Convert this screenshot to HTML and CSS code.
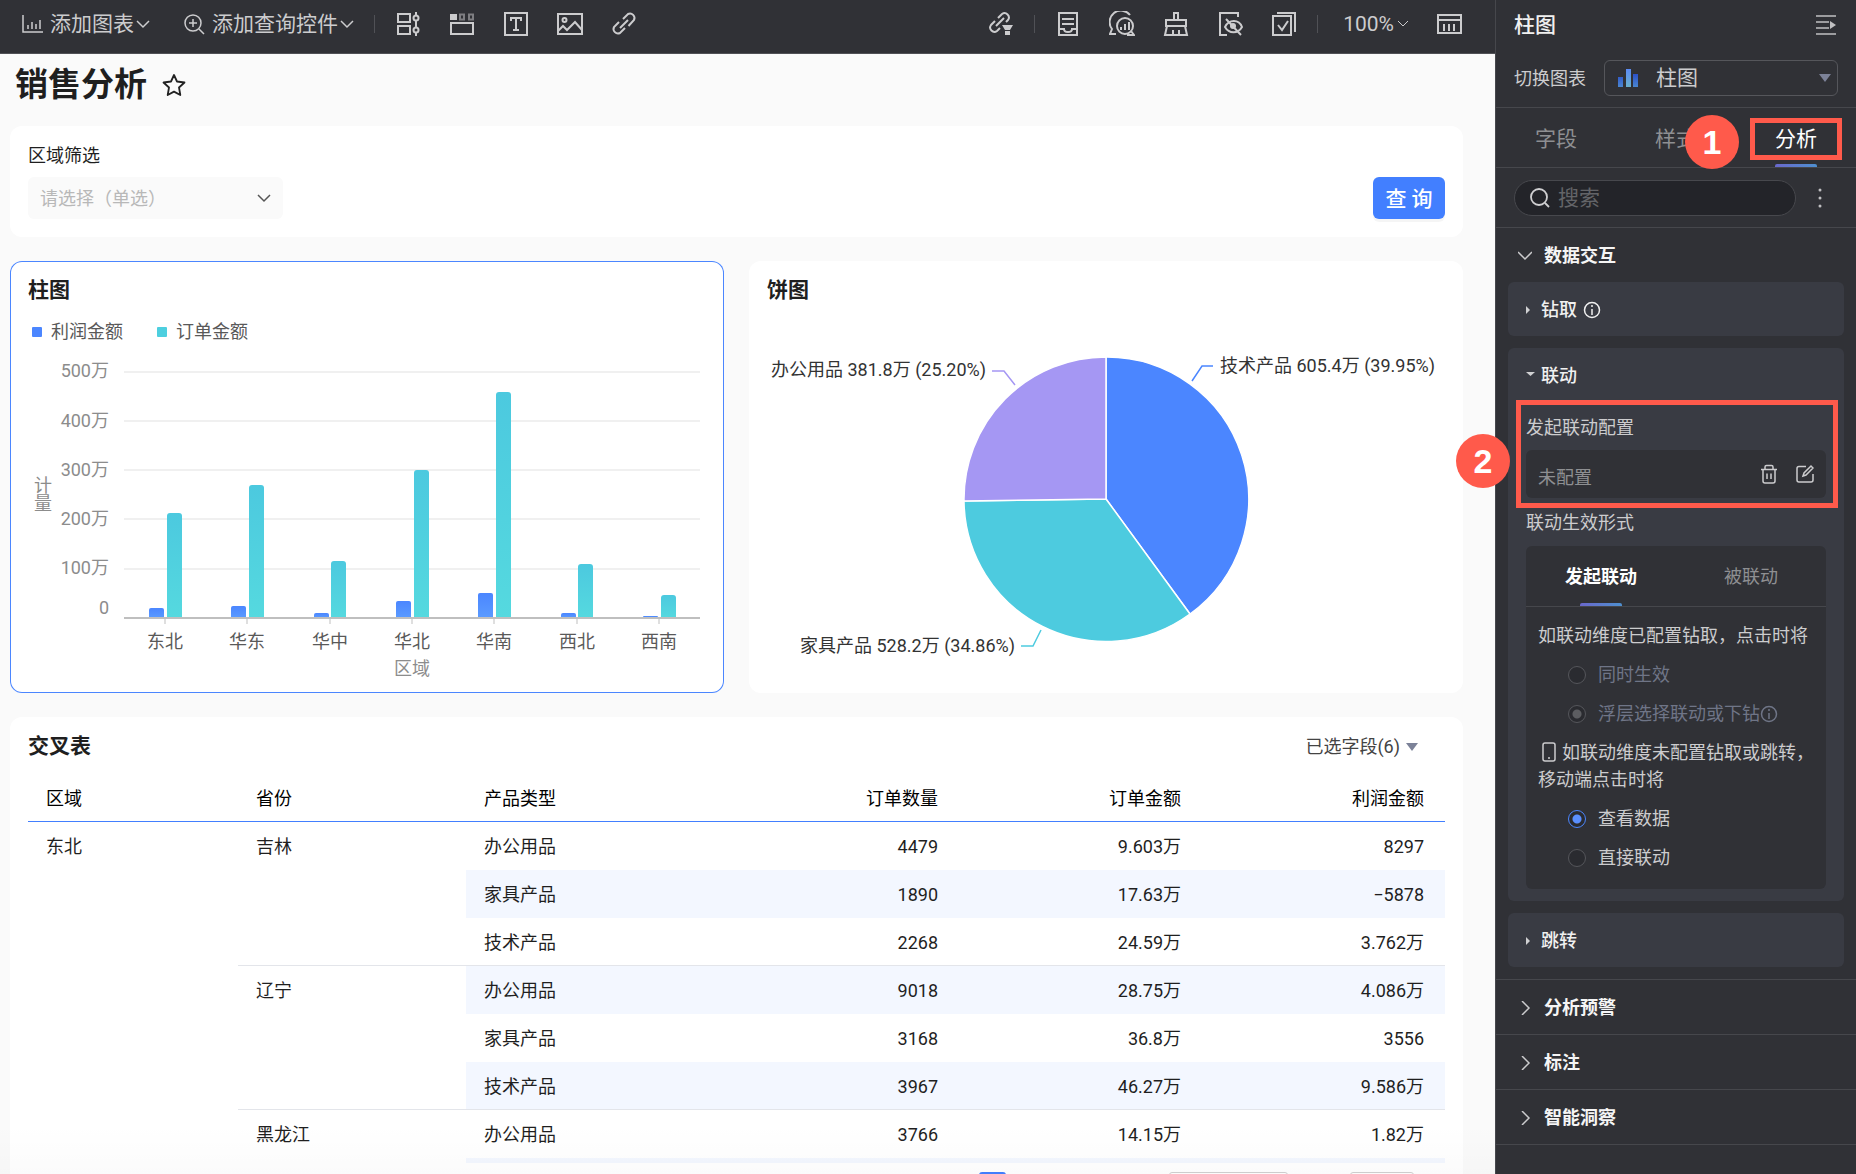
FILE: index.html
```html
<!DOCTYPE html>
<html lang="zh-CN">
<head>
<meta charset="utf-8">
<meta name="viewport" content="width=device-width, initial-scale=1">
<title>销售分析</title>
<link rel="stylesheet" href="styles.css">
</head>
<body>
<div class="app">
  <main class="main">
    <header class="toolbar">
      <div class="tool-group menus">
        <button class="menu-btn" type="button">
          <svg class="icon" width="24" height="24" viewBox="0 0 24 24"><path d="M3 3v17h20M8 17v-4M12 17v-7M16 17v-5M20 17V8"/></svg>
          <span>添加图表</span>
          <svg class="icon" width="14" height="10" viewBox="0 0 14 10"><path d="M1 2l6 6 6-6"/></svg>
        </button>
        <button class="menu-btn" type="button">
          <svg class="icon" width="24" height="24" viewBox="0 0 24 24"><circle cx="11" cy="11" r="8"/><path d="M17 17l5 5M11 7v8M7 11h8"/></svg>
          <span>添加查询控件</span>
          <svg class="icon" width="14" height="10" viewBox="0 0 14 10"><path d="M1 2l6 6 6-6"/></svg>
        </button>
      </div>
      <span class="sep"></span>
      <div class="tool-group">
        <button class="icon-btn" type="button" aria-label="控件布局"><svg class="icon bold" width="26" height="26" viewBox="0 0 26 26"><path d="M3 3h12v8H3zM3 15h12v8H3zM21 1v4M21 9v8M21 21v4"/><circle cx="21" cy="7" r="2.5"/><circle cx="21" cy="19" r="2.5"/></svg></button>
        <button class="icon-btn" type="button" aria-label="标签页"><svg class="icon bold" width="26" height="26" viewBox="0 0 26 26"><path class="solid" d="M1 3h7v6H1z"/><path class="dim" d="M11 3.500h4v5h-4zM20 3.500h4v5h-4z"/><path d="M2 12h22v11H2z"/></svg></button>
        <button class="icon-btn" type="button" aria-label="文本"><svg class="icon bold" width="26" height="26" viewBox="0 0 26 26"><path d="M2 2h22v22H2zM8 10V7h10v3M13 7v12M10 19h6"/></svg></button>
        <button class="icon-btn" type="button" aria-label="图片"><svg class="icon bold" width="26" height="26" viewBox="0 0 26 26"><path d="M1 3h24v20H1zM1 20l5-5 4 4 8-8 7 8"/><circle cx="7.500" cy="9" r="2"/></svg></button>
        <button class="icon-btn" type="button" aria-label="链接"><svg class="icon bold" width="26" height="26" viewBox="0 0 26 26"><path d="M12 8l5-5a4.500 4.500 0 0 1 6 6l-5.500 6M8 11l-5 5a4.500 4.500 0 0 0 6 6l5-5M9 17l8-8"/></svg></button>
      </div>
      <div class="tool-group right">
        <button class="icon-btn" type="button" aria-label="联动设置"><svg class="icon bold" width="26" height="26" viewBox="0 0 26 26"><path d="M10 7l4-4a4.300 4.300 0 0 1 6 6l-2 2M7 10l-4 4a4.300 4.300 0 0 0 6 6l3-3M8 15l8-8"/><path class="solid" d="M14 14h11l-3 5h-5zM17 20h5v4h-5z"/></svg></button>
      </div>
      <span class="sep"></span>
      <div class="tool-group">
        <button class="icon-btn" type="button" aria-label="收纳"><svg class="icon bold" width="26" height="26" viewBox="0 0 26 26"><path d="M4 2h18v22H4zM7 8h12M7 13h12M4 18h5c0 4 8 4 8 0h5"/></svg></button>
        <button class="icon-btn" type="button" aria-label="数据问答"><svg class="icon bold" width="26" height="26" viewBox="0 0 26 26"><path d="M21 4A11 11 0 0 0 3 18l-2 5h6"/><circle cx="16" cy="15" r="8"/><path d="M12 19v-3M16 19v-6M20 19v-8M22 20l3 4h-7"/></svg></button>
        <button class="icon-btn" type="button" aria-label="主题"><svg class="icon bold" width="26" height="26" viewBox="0 0 26 26"><path d="M11 9V2h4v7M3 9h20v6H3zM4 15L2 24h22l-2-9M10 24v-5M16 24v-5"/></svg></button>
        <button class="icon-btn" type="button" aria-label="隐藏"><svg class="icon bold" width="26" height="26" viewBox="0 0 26 26"><path d="M10 24H3V2h18v4M8 16c4-8 14-8 17 0-4 7-13 7-17 0zM9 8l15 16"/><circle class="solid" cx="16" cy="15" r="3"/></svg></button>
        <button class="icon-btn" type="button" aria-label="批量选择"><svg class="icon bold" width="26" height="26" viewBox="0 0 26 26"><path d="M2 5h18v19H2zM6 2h18v19M7 14l4 5 6-9"/></svg></button>
      </div>
      <span class="sep"></span>
      <button class="menu-btn zoom" type="button"><span>100%</span><svg class="icon thin" width="12" height="8" viewBox="0 0 12 8"><path d="M1 1l5 5 5-5"/></svg></button>
      <button class="icon-btn" type="button" aria-label="数据面板"><svg class="icon bold" width="26" height="26" viewBox="0 0 26 26"><path d="M2 4h23v18H2zM2 9h23M8 13v7M13 13v7M18 13v7"/></svg></button>
    </header>

    <div class="canvas">
      <div class="page-title">
        <h1>销售分析</h1>
        <svg width="24" height="24" viewBox="0 0 24 24"><path d="M12 2l3 6.500 7.500 1-5.500 5 1.300 7.500L12 18.600 5.700 22 7 14.500 1.500 9.500 9 8.500z" fill="none" stroke="#222" stroke-width="1.800" stroke-linejoin="round"/></svg>
      </div>

      <form class="card filter">
        <div class="field">
          <label for="region">区域筛选</label>
          <div class="select-wrap">
            <select id="region"><option>请选择（单选）</option></select>
            <svg width="14" height="10" viewBox="0 0 14 10"><path d="M1 2l6 6 6-6" fill="none" stroke="#555" stroke-width="1.500"/></svg>
          </div>
        </div>
        <button class="query" type="button">查 询</button>
      </form>

      <div class="charts">
        <section class="card chart selected">
          <h2>柱图</h2>
          <div class="legend">
            <span><i class="swatch profit"></i>利润金额</span>
            <span><i class="swatch orders"></i>订单金额</span>
          </div>
          <svg class="plot" viewBox="10 351 714 342">
            <defs>
              <linearGradient id="orderFill" x1="0" y1="0" x2="0" y2="1"><stop offset="0" stop-color="#4cc9df"/><stop offset="1" stop-color="#55d9df"/></linearGradient>
              <linearGradient id="profitFill" x1="0" y1="0" x2="0" y2="1"><stop offset="0" stop-color="#4b86ff"/><stop offset="1" stop-color="#5a9bff"/></linearGradient>
            </defs>
            <path d="M124 372h576M124 421h576M124 470h576M124 519h576M124 569h576" stroke="#f0f0f0" stroke-width="2"/>
            <g fill="url(#profitFill)">
              <path d="M149 618v-8q0-2 2-2h11q2 0 2 2v8z"/>
              <path d="M231 618v-10q0-2 2-2h11q2 0 2 2v10z"/>
              <path d="M314 618v-3q0-2 2-2h11q2 0 2 2v3z"/>
              <path d="M396 618v-15q0-2 2-2h11q2 0 2 2v15z"/>
              <path d="M478 618v-23q0-2 2-2h11q2 0 2 2v23z"/>
              <path d="M561 618v-3q0-2 2-2h11q2 0 2 2v3z"/>
              <path d="M643 618v-1q0-1 1-1h13q1 0 1 1v1z"/>
            </g>
            <g fill="url(#orderFill)">
              <path d="M167 618V516q0-3 3-3h9q3 0 3 3v102z"/>
              <path d="M249 618V488q0-3 3-3h9q3 0 3 3v130z"/>
              <path d="M331 618v-54q0-3 3-3h9q3 0 3 3v54z"/>
              <path d="M414 618V473q0-3 3-3h9q3 0 3 3v145z"/>
              <path d="M496 618V395q0-3 3-3h9q3 0 3 3v223z"/>
              <path d="M578 618v-51q0-3 3-3h9q3 0 3 3v51z"/>
              <path d="M661 618v-20q0-3 3-3h9q3 0 3 3v20z"/>
            </g>
            <path d="M124 618h576" stroke="#bfbfbf" stroke-width="2"/>
            <path d="M165 618v6M247 618v6M330 618v6M412 618v6M494 618v6M577 618v6M659 618v6" stroke="#bfbfbf"/>
            <g class="axis" text-anchor="end">
              <text x="109" y="377">500万</text><text x="109" y="427">400万</text><text x="109" y="476">300万</text><text x="109" y="525">200万</text><text x="109" y="574">100万</text><text x="109" y="614">0</text>
            </g>
            <g class="axis" text-anchor="middle">
              <text x="43" y="492">计</text><text x="43" y="510">量</text><text x="412" y="675">区域</text>
            </g>
            <g class="axis category" text-anchor="middle">
              <text x="165" y="648">东北</text><text x="247" y="648">华东</text><text x="330" y="648">华中</text><text x="412" y="648">华北</text><text x="494" y="648">华南</text><text x="577" y="648">西北</text><text x="659" y="648">西南</text>
            </g>
          </svg>
        </section>

        <section class="card chart">
          <h2>饼图</h2>
          <svg class="plot" viewBox="749 317 714 376">
            <g stroke="#fff" stroke-width="1.500" stroke-linejoin="round">
              <path fill="#4b86ff" d="M1106 499V357a142 142 0 0 1 84 257z"/>
              <path fill="#4dcbdf" d="M1106 499l84 115a142 142 0 0 1-226-113z"/>
              <path fill="#a597f3" d="M1106 499l-142 2a142 142 0 0 1 142-144z"/>
            </g>
            <g fill="none" stroke-width="1.500">
              <path stroke="#4b86ff" d="M1192 381l10-15h11"/>
              <path stroke="#4dcbdf" d="M1041 630l-8 16h-12"/>
              <path stroke="#a597f3" d="M1015 385l-11-14h-12"/>
            </g>
            <g class="pie-label">
              <text x="1220" y="372">技术产品 605.4万 (39.95%)</text>
              <text x="986" y="376" text-anchor="end">办公用品 381.8万 (25.20%)</text>
              <text x="1015" y="652" text-anchor="end">家具产品 528.2万 (34.86%)</text>
            </g>
          </svg>
        </section>
      </div>

      <section class="card cross">
        <div class="cross-head">
          <h2>交叉表</h2>
          <button class="fields" type="button">已选字段(6)<svg width="12" height="8" viewBox="0 0 12 8"><path d="M0 0h12L6 8z" fill="#7c8298"/></svg></button>
        </div>
        <div class="table-wrap">
          <table>
            <colgroup><col class="c-region"><col class="c-province"><col><col class="c-num"><col class="c-num"><col class="c-num"></colgroup>
            <thead><tr><th>区域</th><th>省份</th><th>产品类型</th><th class="num">订单数量</th><th class="num">订单金额</th><th class="num">利润金额</th></tr></thead>
            <tbody>
              <tr><td rowspan="8">东北</td><td rowspan="3" class="end">吉林</td><td>办公用品</td><td class="num">4479</td><td class="num">9.603万</td><td class="num">8297</td></tr>
              <tr class="alt"><td>家具产品</td><td class="num">1890</td><td class="num">17.63万</td><td class="num">−5878</td></tr>
              <tr class="last"><td>技术产品</td><td class="num">2268</td><td class="num">24.59万</td><td class="num">3.762万</td></tr>
              <tr class="alt"><td rowspan="3" class="plain end">辽宁</td><td>办公用品</td><td class="num">9018</td><td class="num">28.75万</td><td class="num">4.086万</td></tr>
              <tr><td>家具产品</td><td class="num">3168</td><td class="num">36.8万</td><td class="num">3556</td></tr>
              <tr class="alt last"><td>技术产品</td><td class="num">3967</td><td class="num">46.27万</td><td class="num">9.586万</td></tr>
              <tr><td rowspan="2">黑龙江</td><td>办公用品</td><td class="num">3766</td><td class="num">14.15万</td><td class="num">1.82万</td></tr>
              <tr class="alt"><td></td><td></td><td></td><td></td></tr>
            </tbody>
          </table>
        </div>
        <div class="pager">
          <button class="page current" type="button" aria-label="第一页"></button>
          <select class="page-size" aria-label="每页条数"></select>
          <input class="page-jump" type="text" aria-label="跳至">
        </div>
      </section>
    </div>
  </main>

  <aside class="panel">
    <header class="panel-head">
      <h2>柱图</h2>
      <button class="icon-btn" type="button" aria-label="收起面板"><svg width="20" height="20" viewBox="0 0 20 20"><path d="M0 1h20M0 7h13M0 13h13M0 19h20" fill="none" stroke="#c0c0c2" stroke-width="1.600"/><path d="M14 6l6 4-6 4z" fill="#c0c0c2"/></svg></button>
    </header>
    <div class="switch">
      <label for="chart-type">切换图表</label>
      <div class="type-wrap">
        <svg width="20" height="18" viewBox="0 0 20 18"><defs><linearGradient id="barIcon" x1="0" y1="0" x2="0" y2="1"><stop offset="0" stop-color="#2b50c8"/><stop offset="1" stop-color="#4a86d0"/></linearGradient><linearGradient id="barIconMid" x1="0" y1="0" x2="0" y2="1"><stop offset="0" stop-color="#5b8bf5"/><stop offset="1" stop-color="#6ab0cc"/></linearGradient></defs><path fill="url(#barIcon)" d="M0 8h5v10H0zM15 5h5v13h-5z"/><path fill="url(#barIconMid)" d="M8 0h5v18H8z"/></svg>
        <select id="chart-type"><option>柱图</option></select>
        <svg width="12" height="8" viewBox="0 0 12 8"><path d="M0 0h12L6 8z" fill="#7c8298"/></svg>
      </div>
    </div>
    <nav class="tabs">
      <button type="button">字段</button>
      <button type="button">样式<span class="badge one">1</span></button>
      <button class="active marked" type="button">分析</button>
    </nav>
    <div class="search-row">
      <div class="search">
        <svg width="20" height="20" viewBox="0 0 20 20"><circle cx="9" cy="9" r="8" fill="none" stroke="#d0d0d2" stroke-width="1.800"/><path d="M15 15l4 4" stroke="#d0d0d2" stroke-width="1.800"/></svg>
        <input type="text" placeholder="搜索" aria-label="搜索">
      </div>
      <button class="icon-btn" type="button" aria-label="更多"><svg width="4" height="20" viewBox="0 0 4 20" fill="#c0c0c2"><circle cx="2" cy="2" r="1.500"/><circle cx="2" cy="10" r="1.500"/><circle cx="2" cy="18" r="1.500"/></svg></button>
    </div>

    <section class="group open">
      <button class="group-head" type="button"><svg class="icon" width="14" height="14" viewBox="0 0 14 14"><path d="M0 3l7 7 7-7"/></svg>数据交互</button>
      <div class="block">
        <button class="block-head" type="button"><svg width="9" height="10" viewBox="0 0 9 10"><path d="M0 1v8l4-4z" fill="#d0d0d2"/></svg>钻取<svg class="icon" width="18" height="18" viewBox="0 0 18 18"><circle cx="9" cy="9" r="7.500"/><path d="M9 8v6M9 4v2"/></svg></button>
      </div>
      <div class="block linkage">
        <button class="block-head" type="button"><svg width="9" height="10" viewBox="0 0 9 10"><path d="M0 1h9L4.500 5z" fill="#d0d0d2"/></svg>联动</button>
        <div class="config">
          <span class="badge two">2</span>
          <p>发起联动配置</p>
          <div class="config-box">
            <span>未配置</span>
            <button class="icon-btn" type="button" aria-label="删除"><svg class="icon" width="18" height="20" viewBox="0 0 18 20"><path d="M1 5.500h16M5 5V3q0-1.500 1.500-1.500h5Q13 1.500 13 3v2M3 6v11q0 2 2 2h8q2 0 2-2V6M7 9.500v5.500M11 9.500v5.500"/></svg></button>
            <button class="icon-btn" type="button" aria-label="编辑"><svg class="icon" width="18" height="20" viewBox="0 0 18 20"><path d="M10 2.500H3q-2 0-2 2V16q0 2 2 2h12q2 0 2-2V10M7 12l1-3 7-7 2 2-7 7z"/></svg></button>
          </div>
        </div>
        <p class="effect-title">联动生效形式</p>
        <div class="effect">
          <nav class="subtabs"><button class="active" type="button">发起联动</button><button type="button">被联动</button></nav>
          <div class="effect-body">
            <p>如联动维度已配置钻取，点击时将</p>
            <label class="off"><input type="radio" name="drill" disabled>同时生效</label>
            <label class="off"><input type="radio" name="drill" disabled checked>浮层选择联动或下钻<svg class="icon" width="18" height="18" viewBox="0 0 18 18"><circle cx="9" cy="9" r="7.500"/><path d="M9 8v6M9 4v2"/></svg></label>
            <p><svg class="icon phone" width="20" height="20" viewBox="0 0 20 20"><path d="M5 1h8q2 0 2 2v14q0 2-2 2H5q-2 0-2-2V3q0-2 2-2zM8 16h2"/></svg>如联动维度未配置钻取或跳转，<br>移动端点击时将</p>
            <label><input type="radio" name="mobile" checked>查看数据</label>
            <label><input type="radio" name="mobile">直接联动</label>
          </div>
        </div>
      </div>
      <div class="block">
        <button class="block-head" type="button"><svg width="9" height="10" viewBox="0 0 9 10"><path d="M0 1v8l4-4z" fill="#d0d0d2"/></svg>跳转</button>
      </div>
    </section>
    <section class="group"><button class="group-head" type="button"><svg class="icon" width="14" height="14" viewBox="0 0 14 14"><path d="M4 0l7 7-7 7"/></svg>分析预警</button></section>
    <section class="group"><button class="group-head" type="button"><svg class="icon" width="14" height="14" viewBox="0 0 14 14"><path d="M4 0l7 7-7 7"/></svg>标注</button></section>
    <section class="group"><button class="group-head" type="button"><svg class="icon" width="14" height="14" viewBox="0 0 14 14"><path d="M4 0l7 7-7 7"/></svg>智能洞察</button></section>
  </aside>
</div>
</body>
</html>
```
FILE: styles.css
```css
:root {
  --font: Roboto, "Noto Sans CJK SC", sans-serif;
  --dark: #303136;
  --block: #393b43;
  --line: #46474c;
  --light: #ccccce;
  --mark: #ff5a4b;
  --blue: #427fff;
}

* { box-sizing: border-box; }

body, h1, h2, p { margin: 0; }

body {
  font: 18px/24px var(--font);
  color: #1f1f1f;
  background: #fafafa;
  overflow: hidden;
}

button, input, select {
  font: inherit;
  color: inherit;
  border: 0;
  padding: 0;
  background: none;
  appearance: none;
}

svg { flex: none; display: block; }

.app {
  display: grid;
  grid-template-columns: minmax(0, 1fr) 361px;
  height: 100vh;
}

.icon { fill: none; stroke: currentColor; stroke-width: 1.5; }
.icon.bold { stroke-width: 2; }
.icon.thin { stroke-width: 1; }
.icon .solid { fill: currentColor; stroke: none; }
.icon .dim { opacity: .5; }
.icon-btn { display: flex; }

/* main area */
.main {
  position: relative;
  display: flex;
  flex-direction: column;
  height: 100vh;
  overflow: hidden;
}

.main::after {
  content: "";
  position: absolute;
  inset: auto 0 0;
  height: 50px;
  background: linear-gradient(transparent, rgba(0, 0, 0, .015));
  pointer-events: none;
}

.toolbar {
  flex: none;
  display: flex;
  align-items: center;
  gap: 20px;
  height: 54px;
  padding: 0 33px 5px 20px;
  color: var(--light);
  background: var(--dark);
  border-bottom: 1px solid #505156;
}

.tool-group { display: flex; gap: 28px; }
.tool-group.menus { gap: 32px; }
.tool-group.right { margin-left: auto; }
.sep { width: 1px; height: 18px; background: #505156; }

.menu-btn {
  display: flex;
  align-items: center;
  font-size: 21px;
  line-height: 28px;
}

.menu-btn span { margin: 0 2px 0 6px; }
.menu-btn.zoom { margin-right: 7px; }
.menu-btn.zoom span { margin: 0 3px 0 5px; }

.canvas { padding: 0 32px 0 10px; }

.page-title {
  display: flex;
  align-items: center;
  gap: 15px;
  height: 72px;
  padding: 0 5px 10px;
}

h1 { font-size: 33px; line-height: 48px; font-weight: 700; }

h2 { font-size: 21px; line-height: 28px; font-weight: 700; }

.card { background: #fff; border-radius: 12px; }

.filter {
  display: flex;
  justify-content: space-between;
  align-items: flex-end;
  height: 111px;
  padding: 18px;
}

.field { display: flex; flex-direction: column; gap: 9px; }

.select-wrap {
  display: flex;
  align-items: center;
  width: 255px;
  height: 42px;
  padding: 0 12px;
  border-radius: 6px;
  background: #fafafa;
}

.select-wrap select { flex: 1; padding-top: 2px; color: #b8b8b8; }

.query {
  width: 72px;
  height: 42px;
  padding-top: 1px;
  border-radius: 6px;
  color: #fff;
  font-size: 21px;
  font-weight: 500;
  background: var(--blue);
  box-shadow: 0 3px 0 rgba(0, 0, 0, .04);
}

.charts {
  display: grid;
  grid-template-columns: 1fr 1fr;
  gap: 25px;
  margin: 24px 0;
}

.chart { padding-top: 15px; overflow: hidden; }
.chart.selected { box-shadow: inset 0 0 0 1px #4b86ff; }
.chart h2 { padding: 0 18px; }
.plot { width: 100%; margin-top: 13px; }
.plot text { font: 18px var(--font); }
.axis { fill: #8c8c8c; }
.axis.category { fill: #595959; }
.pie-label { fill: #333; }

.legend {
  display: flex;
  gap: 34px;
  padding: 16px 22px 0;
  color: #595959;
}

.legend + .plot { margin-top: 7px; }
.legend span { display: flex; align-items: center; gap: 9px; }
.swatch { width: 10px; height: 10px; border-radius: 1px; }
.profit { background: #4b86ff; }
.orders { background: #4dcfdf; }

.cross { padding: 15px 18px 24px; }

.cross-head {
  display: flex;
  justify-content: space-between;
  align-items: center;
  padding-right: 27px;
}

.fields {
  display: flex;
  align-items: center;
  gap: 6px;
  padding-top: 2px;
  color: #444;
}

.table-wrap {
  height: 387px;
  margin-top: 16px;
  overflow: hidden;
}

table {
  width: 100%;
  table-layout: fixed;
  border-collapse: separate;
  border-spacing: 0;
}

.c-region { width: 210px; }
.c-province { width: 228px; }
.c-num { width: 243px; }

th, td {
  height: 48px;
  padding: 13px 18px 11px;
  text-align: left;
  vertical-align: top;
}

th {
  height: 46px;
  padding: 11px 18px;
  font-weight: 400;
  line-height: 23px;
  color: #000;
  border-bottom: 1px solid var(--blue);
}

.num { text-align: right; padding-right: 21px; }
.alt td { background: #f3f7ff; }
.alt td.plain { background: none; }
.last td, td.end { border-bottom: 1px solid #e3e5ea; padding-bottom: 10px; }

.pager {
  display: flex;
  justify-content: flex-end;
  padding: 9px 31px 0 0;
}

.page.current { width: 27px; height: 36px; border-radius: 3px; background: var(--blue); }

.page-size, .page-jump {
  width: 119px;
  height: 36px;
  margin-left: 163px;
  border: 1px solid #d0d0d0;
  border-radius: 3px;
}

.page-jump { width: 64px; margin-left: 62px; }

/* side panel */
.panel {
  position: relative;
  z-index: 1;
  color: var(--light);
  background: var(--dark);
  border-left: 1px solid var(--line);
}

.panel h2 { color: #f0f0f0; font-weight: 500; }

.panel-head {
  display: flex;
  justify-content: space-between;
  align-items: center;
  height: 54px;
  padding: 0 20px 4px 18px;
}

.switch {
  display: flex;
  align-items: center;
  gap: 18px;
  height: 54px;
  padding: 0 18px 6px;
  border-bottom: 1px solid var(--line);
}

.switch label { padding-top: 2px; }

.type-wrap {
  flex: 1;
  display: flex;
  align-items: center;
  height: 36px;
  padding: 0 6px 0 13px;
  border: 1px solid #55565b;
  border-radius: 6px;
}

.type-wrap select {
  flex: 1;
  margin-left: 18px;
  padding-top: 1px;
  font-size: 21px;
  line-height: 28px;
}

.tabs {
  display: grid;
  grid-template-columns: repeat(3, 1fr);
  height: 60px;
  border-bottom: 1px solid var(--line);
}

.tabs button {
  position: relative;
  padding-top: 2px;
  font-size: 21px;
  color: #8e8f92;
}

.tabs .active { color: #fff; }

.tabs .active::after, .subtabs .active::after {
  content: "";
  position: absolute;
  bottom: 0;
  left: calc(50% - 21px);
  width: 42px;
  height: 3px;
  border-radius: 2px 2px 0 0;
  background: linear-gradient(90deg, #6a68cc, #4e90d0);
}

/* numbered callouts */
.badge {
  position: absolute;
  z-index: 2;
  display: grid;
  place-items: center;
  width: 54px;
  height: 54px;
  border-radius: 50%;
  font: 700 34px/54px "Liberation Sans", sans-serif;
  color: #fff;
  background: var(--mark);
}

.badge.one { left: 69px; top: 7px; }
.badge.two { left: -65px; top: 29px; }

.marked::before {
  content: "";
  position: absolute;
  inset: 10px 14px 7px;
  border: 5px solid var(--mark);
}

.search-row {
  display: flex;
  align-items: center;
  justify-content: space-between;
  height: 60px;
  padding: 0 34px 0 18px;
  border-bottom: 1px solid var(--line);
}

.search {
  display: flex;
  align-items: center;
  gap: 8px;
  width: 282px;
  height: 36px;
  padding: 0 15px;
  border: 1px solid #47484d;
  border-radius: 18px;
  background: #232429;
}

.search input { flex: 1; min-width: 0; font-size: 21px; line-height: 28px; }
.search input::placeholder { color: #636468; opacity: 1; }

.group { border-bottom: 1px solid var(--line); }

.group.open {
  display: flex;
  flex-direction: column;
  gap: 12px;
  padding: 0 12px 12px;
}

.group-head {
  display: flex;
  align-items: center;
  gap: 12px;
  height: 54px;
  padding: 2px 0 0 22px;
  font-weight: 700;
  color: #f5f5f5;
}

.open .group-head { height: 42px; padding: 14px 0 0 10px; }
.group-head .icon { color: var(--light); }

.block { border-radius: 6px; background: var(--block); }

.block-head {
  display: flex;
  align-items: center;
  gap: 6px;
  height: 54px;
  padding: 2px 0 0 18px;
  font-weight: 500;
  color: #f0f0f0;
}

.linkage { padding-bottom: 12px; }
.linkage .block-head { height: 52px; padding-top: 4px; }

.config {
  position: relative;
  margin: 0 6px 0 8px;
  padding: 11px 7px 5px 5px;
  border: 5px solid var(--mark);
}

.config-box {
  display: flex;
  align-items: center;
  gap: 18px;
  height: 48px;
  margin-top: 10px;
  padding: 0 12px;
  border-radius: 6px;
  color: #8e8f92;
  background: var(--dark);
}

.config-box span { flex: 1; padding-top: 8px; }
.config-box button { color: var(--light); }

.effect-title { padding: 3px 18px 11px; }

.effect { margin: 0 18px; border-radius: 6px; background: var(--dark); }

.subtabs {
  display: grid;
  grid-template-columns: 1fr 1fr;
  height: 61px;
  border-bottom: 1px solid var(--line);
}

.subtabs button { position: relative; padding-top: 2px; color: #8e8f92; }
.subtabs .active { color: #fff; font-weight: 700; }

.effect-body { padding: 9px 12px 12px; }
.effect-body p { margin: 6px 0; line-height: 27px; }

.effect-body label {
  display: flex;
  align-items: center;
  height: 39px;
  padding-left: 30px;
}

.effect-body .off { color: #6f7587; }
.phone { display: inline-block; width: 24px; vertical-align: -3px; }

.effect-body input {
  width: 18px;
  height: 18px;
  margin: 0 12px 0 0;
  border: 1px solid #55565b;
  border-radius: 50%;
  background: #2a2b30;
}

.effect-body input:checked {
  border-color: #4b86ff;
  background: radial-gradient(#5a8fff 4px, #2a2b30 5px);
}

.effect-body input:checked:disabled {
  border-color: #55565b;
  background: radial-gradient(#5c5d61 4px, #2a2b30 5px);
}
```
